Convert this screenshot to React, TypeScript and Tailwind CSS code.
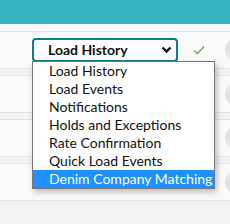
import React from "react";

const options = [
  "Load History",
  "Load Events",
  "Notifications",
  "Holds and Exceptions",
  "Rate Confirmation",
  "Quick Load Events",
  "Denim Company Matching",
];

function Circle() {
  return <div className="w-[22px] h-[22px] rounded-full bg-[#e2e2e2] shrink-0 mr-[-17px]" />;
}

export default function App() {
  return (
    <div
      className="w-[230px] h-[224px] overflow-hidden bg-[#f3f3f3] flex flex-col"
      style={{ fontFamily: "Lato, 'Noto Sans', sans-serif" }}
    >
      <div className="h-[24px] bg-[#38b1c1] shrink-0" />
      <div className="h-[7px] bg-[#fafafa] shrink-0" />
      <div className="flex flex-col gap-[6px]">
        <div className="h-[38px] border-y border-[#e4e4e4] bg-[#fafafa] flex items-center pl-[32px] relative">
          <div className="relative">
            <div className="w-[146px] h-[24px] border-2 border-[#0d7b88] rounded-[4px] bg-white flex items-center pl-[14px] pr-[4px]">
              <span className="text-[14px] font-bold text-[#111] leading-none">Load History</span>
              <svg className="ml-auto" width="11" height="8" viewBox="0 0 11 8">
                <path d="M1.5 1.5 L5.5 5.5 L9.5 1.5" fill="none" stroke="#111" strokeWidth="2.4" />
              </svg>
            </div>
            <div className="absolute left-0 top-[23px] w-[183px] bg-white border border-[#767676] shadow-[2px_3px_6px_rgba(0,0,0,0.25)] z-10">
              {options.map((o, i) => (
                <div
                  key={o}
                  className={
                    "h-[18px] pl-[16px] text-[14px] leading-[18px] whitespace-nowrap " +
                    (i === options.length - 1 ? "bg-[#1e90ff] text-white" : "text-[#111]")
                  }
                >
                  {o}
                </div>
              ))}
            </div>
          </div>
          <svg className="ml-[15px]" width="12" height="10" viewBox="0 0 12 10">
            <path d="M1 5.5 L4.5 8.5 L11 1.5" fill="none" stroke="#62ad62" strokeWidth="1.4" />
          </svg>
          <div className="ml-auto">
            <Circle />
          </div>
        </div>
        {[0, 1, 2].map((i) => (
          <div key={i} className="h-[38px] border-y border-[#e4e4e4] bg-[#fafafa] flex items-center justify-end">
            <Circle />
          </div>
        ))}
      </div>
    </div>
  );
}
